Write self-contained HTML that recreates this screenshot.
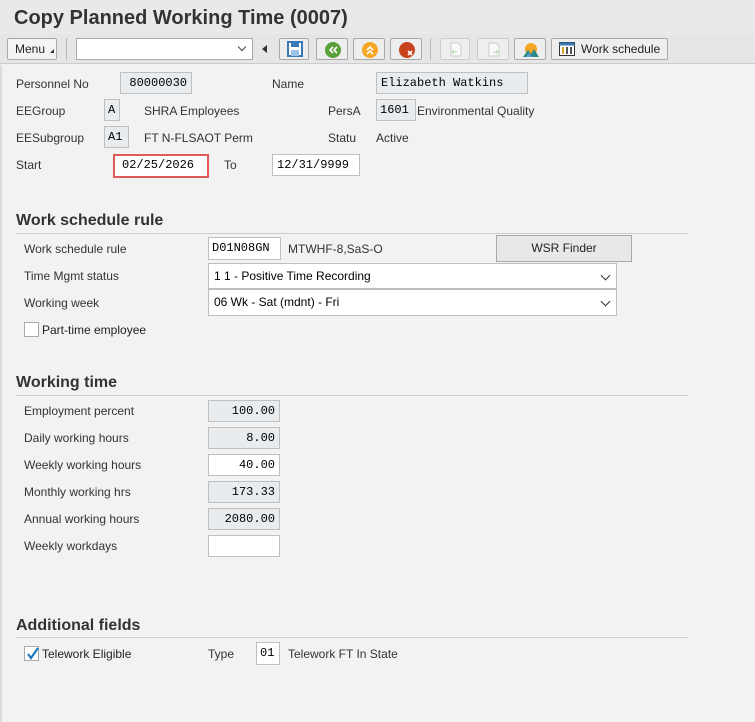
<!DOCTYPE html>
<html><head><meta charset="utf-8"><style>
*{margin:0;padding:0;box-sizing:border-box}
body{width:755px;height:722px;background:#f2f2f2;font-family:"Liberation Sans",Arial,sans-serif;font-size:12px;color:#333;position:relative;overflow:hidden}
.a{position:absolute;white-space:nowrap}
.t{position:absolute;white-space:nowrap;line-height:14px}
.box{position:absolute;border:1px solid #bfbfbf;background:#fff;font-family:"Liberation Mono",monospace;font-size:12px;color:#000;padding:0 4px;line-height:21px}
.g{background:#e9ecee}
.r{text-align:right}
.h{position:absolute;left:16px;font-size:16px;font-weight:bold;color:#333}
.ln{position:absolute;left:16px;width:672px;height:1px;background:#cfcfcf}
.btn{position:absolute;top:38px;height:22px;border:1px solid #a9a9a9;background:#eeeeee;border-radius:2px}
.dd{position:absolute;border:1px solid #bfbfbf;background:#fff;font-size:12px;color:#000;padding-left:5px;line-height:24px}
.chev{position:absolute;right:7px;top:8px;width:7px;height:7px;border-right:1.5px solid #333;border-bottom:1.5px solid #333;transform:rotate(45deg)}
</style></head><body>
<div class="a" style="left:0;top:0;width:755px;height:34px;background:#e9e9e9"></div>
<div class="a" style="left:0;top:34px;width:755px;height:30px;background:#e6e6e6;border-bottom:1px solid #cccccc"></div>
<div class="a" style="left:0;top:65px;width:2px;height:657px;background:#dcdcdc"></div>
<div class="a" style="left:14px;top:7px;font-size:20px;font-weight:bold;color:#333">Copy Planned Working Time (0007)</div>

<div class="btn" style="left:7px;width:50px;background:#f4f4f4"><span class="a" style="left:7px;top:3px;font-size:12px;color:#222">Menu</span><span class="a" style="left:42px;top:10px;width:0;height:0;border-left:4px solid transparent;border-bottom:4px solid #333"></span></div>
<div class="a" style="left:66px;top:38px;width:1px;height:22px;background:#bbb"></div>
<div class="a" style="left:76px;top:38px;width:177px;height:22px;background:#fff;border:1px solid #aaa"><span class="a" style="right:7px;top:5px;width:6px;height:6px;border-right:1.5px solid #444;border-bottom:1.5px solid #444;transform:rotate(45deg)"></span></div>
<div class="a" style="left:262px;top:45px;width:0;height:0;border-top:4px solid transparent;border-bottom:4px solid transparent;border-right:5px solid #333"></div>
<div class="btn" style="left:279px;width:30px"><svg class="a" style="left:7px;top:2px" width="16" height="16"><rect x="1" y="1" width="14" height="14" fill="#fff" stroke="#3a78b8" stroke-width="2"/><rect x="4" y="1" width="8" height="5" fill="#3a78b8"/><rect x="4" y="9" width="8" height="6" fill="#9cc3e6"/></svg></div>
<div class="btn" style="left:316px;width:32px"><svg class="a" style="left:7px;top:2px" width="18" height="17"><circle cx="9" cy="9" r="8" fill="#5aa03a"/><path d="M9 6l-3 3 3 3M13 6l-3 3 3 3" stroke="#fff" stroke-width="1.6" fill="none"/></svg></div>
<div class="btn" style="left:353px;width:32px"><svg class="a" style="left:7px;top:2px" width="18" height="17"><circle cx="9" cy="9" r="8" fill="#f5a623"/><path d="M6 9l3-3 3 3M6 13l3-3 3 3" stroke="#fff" stroke-width="1.6" fill="none"/></svg></div>
<div class="btn" style="left:390px;width:32px"><svg class="a" style="left:7px;top:2px" width="18" height="17"><circle cx="9" cy="9" r="8" fill="#c8431c"/><path d="M10 10l4 4M14 10l-4 4" stroke="#fff" stroke-width="1.6"/></svg></div>
<div class="a" style="left:430px;top:38px;width:1px;height:22px;background:#bbb"></div>
<div class="btn" style="left:440px;width:30px;border-color:#ccc"><svg class="a" style="left:8px;top:3px" width="14" height="15"><path d="M2 1h7l3 3v10H2z" fill="#fafafa" stroke="#ccc"/><path d="M8 10H3M5 8l-2 2 2 2" stroke="#b8d8b0" fill="none"/></svg></div>
<div class="btn" style="left:477px;width:32px;border-color:#ccc"><svg class="a" style="left:9px;top:3px" width="14" height="15"><path d="M2 1h7l3 3v10H2z" fill="#fafafa" stroke="#ccc"/><path d="M6 10h5M9 8l2 2-2 2" stroke="#b8d8b0" fill="none"/></svg></div>
<div class="btn" style="left:514px;width:32px"><svg class="a" style="left:7px;top:2px" width="18" height="17"><circle cx="9" cy="8" r="6" fill="#f5a623"/><path d="M1 16l5-7 3 4 3-5 5 8z" fill="#2c8c8c"/><path d="M4 16l3-4 3 4z" fill="#5aa0d0"/></svg></div>
<div class="btn" style="left:551px;width:117px"><svg class="a" style="left:7px;top:3px" width="16" height="14"><rect x="0.5" y="0.5" width="15" height="13" fill="#fff" stroke="#333"/><rect x="0.5" y="0.5" width="15" height="3" fill="#3a78b8"/><rect x="3" y="5" width="2" height="7" fill="#e0a020"/><rect x="7" y="5" width="2" height="7" fill="#555"/><rect x="11" y="5" width="2" height="7" fill="#555"/></svg><span class="a" style="left:29px;top:3px;font-size:12px;color:#222">Work schedule</span></div>

<div class="t" style="left:16px;top:77px">Personnel No</div>
<div class="box g r" style="left:120px;top:72px;width:72px;height:22px">80000030</div>
<div class="t" style="left:272px;top:77px">Name</div>
<div class="box g" style="left:376px;top:72px;width:152px;height:22px">Elizabeth Watkins</div>
<div class="t" style="left:16px;top:104px">EEGroup</div>
<div class="box g" style="left:104px;top:99px;width:16px;height:22px;padding:0 3px">A</div>
<div class="t" style="left:144px;top:104px">SHRA Employees</div>
<div class="t" style="left:328px;top:104px">PersA</div>
<div class="box g" style="left:376px;top:99px;width:40px;height:22px;padding:0 3px">1601</div>
<div class="t" style="left:417px;top:104px">Environmental Quality</div>
<div class="t" style="left:16px;top:131px">EESubgroup</div>
<div class="box g" style="left:104px;top:126px;width:25px;height:22px;padding:0 3px">A1</div>
<div class="t" style="left:144px;top:131px">FT N-FLSAOT Perm</div>
<div class="t" style="left:328px;top:131px">Statu</div>
<div class="t" style="left:376px;top:131px">Active</div>
<div class="t" style="left:16px;top:158px">Start</div>
<div class="box" style="left:113px;top:154px;width:96px;height:24px;border:2px solid #e05a5a;line-height:19px;padding:0 7px">02/25/2026</div>
<div class="t" style="left:224px;top:158px">To</div>
<div class="box" style="left:272px;top:154px;width:88px;height:22px">12/31/9999</div>

<div class="h" style="top:212px">Work schedule rule</div>
<div class="ln" style="top:233px"></div>
<div class="t" style="left:24px;top:242px">Work schedule rule</div>
<div class="box" style="left:208px;top:237px;width:73px;height:23px;padding:0 3px">D01N08GN</div>
<div class="t" style="left:288px;top:242px">MTWHF-8,SaS-O</div>
<div class="a" style="left:496px;top:235px;width:136px;height:27px;border:1px solid #a9a9a9;background:#e8e8e8;text-align:center;line-height:25px;color:#222">WSR Finder</div>
<div class="t" style="left:24px;top:269px">Time Mgmt status</div>
<div class="dd" style="left:208px;top:263px;width:409px;height:26px">1 1 - Positive Time Recording<span class="chev"></span></div>
<div class="t" style="left:24px;top:296px">Working week</div>
<div class="dd" style="left:208px;top:289px;width:409px;height:27px">06 Wk - Sat (mdnt) - Fri<span class="chev"></span></div>
<div class="a" style="left:24px;top:322px;width:15px;height:15px;border:1px solid #aaa;background:#fff"></div>
<div class="t" style="left:42px;top:323px;color:#222">Part-time employee</div>

<div class="h" style="top:374px">Working time</div>
<div class="ln" style="top:395px"></div>
<div class="t" style="left:24px;top:404px">Employment percent</div>
<div class="box g r" style="left:208px;top:400px;width:72px;height:22px">100.00</div>
<div class="t" style="left:24px;top:431px">Daily working hours</div>
<div class="box g r" style="left:208px;top:427px;width:72px;height:22px">8.00</div>
<div class="t" style="left:24px;top:458px">Weekly working hours</div>
<div class="box r" style="left:208px;top:454px;width:72px;height:22px">40.00</div>
<div class="t" style="left:24px;top:485px">Monthly working hrs</div>
<div class="box g r" style="left:208px;top:481px;width:72px;height:22px">173.33</div>
<div class="t" style="left:24px;top:512px">Annual working hours</div>
<div class="box g r" style="left:208px;top:508px;width:72px;height:22px">2080.00</div>
<div class="t" style="left:24px;top:539px">Weekly workdays</div>
<div class="box" style="left:208px;top:535px;width:72px;height:22px"></div>

<div class="h" style="top:617px">Additional fields</div>
<div class="ln" style="top:637px"></div>
<div class="a" style="left:24px;top:646px;width:15px;height:15px;border:1px solid #aaa;background:#fff"><svg class="a" style="left:1px;top:0" width="13" height="13"><path d="M2 7l3 4 7-10" stroke="#1a7ac0" stroke-width="2.2" fill="none"/></svg></div>
<div class="t" style="left:42px;top:647px;color:#222">Telework Eligible</div>
<div class="t" style="left:208px;top:647px">Type</div>
<div class="box" style="left:256px;top:642px;width:24px;height:23px;padding:0 3px">01</div>
<div class="t" style="left:288px;top:647px">Telework FT In State</div>
</body></html>
